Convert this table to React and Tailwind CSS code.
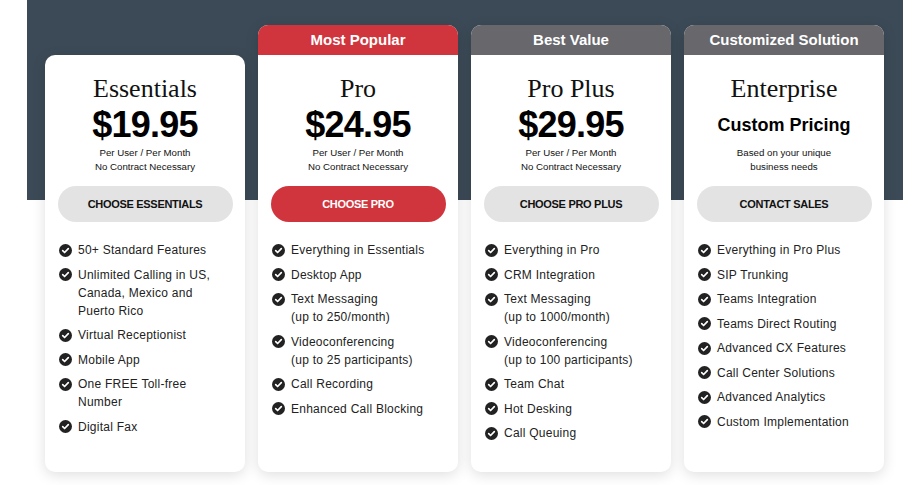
import React from "react";

const plans = [
  {
    header: null,
    title: "Essentials",
    price: "$19.95",
    sub: ["Per User / Per Month", "No Contract Necessary"],
    button: "CHOOSE ESSENTIALS",
    primary: false,
    features: [
      ["50+ Standard Features"],
      ["Unlimited Calling in US,", "Canada, Mexico and", "Puerto Rico"],
      ["Virtual Receptionist"],
      ["Mobile App"],
      ["One FREE Toll-free", "Number"],
      ["Digital Fax"],
    ],
  },
  {
    header: "Most Popular",
    headerRed: true,
    title: "Pro",
    price: "$24.95",
    sub: ["Per User / Per Month", "No Contract Necessary"],
    button: "CHOOSE PRO",
    primary: true,
    features: [
      ["Everything in Essentials"],
      ["Desktop App"],
      ["Text Messaging", "(up to 250/month)"],
      ["Videoconferencing", "(up to 25 participants)"],
      ["Call Recording"],
      ["Enhanced Call Blocking"],
    ],
  },
  {
    header: "Best Value",
    title: "Pro Plus",
    price: "$29.95",
    sub: ["Per User / Per Month", "No Contract Necessary"],
    button: "CHOOSE PRO PLUS",
    primary: false,
    features: [
      ["Everything in Pro"],
      ["CRM Integration"],
      ["Text Messaging", "(up to 1000/month)"],
      ["Videoconferencing", "(up to 100 participants)"],
      ["Team Chat"],
      ["Hot Desking"],
      ["Call Queuing"],
    ],
  },
  {
    header: "Customized Solution",
    title: "Enterprise",
    custom: "Custom Pricing",
    sub: ["Based on your unique", "business needs"],
    button: "CONTACT SALES",
    primary: false,
    features: [
      ["Everything in Pro Plus"],
      ["SIP Trunking"],
      ["Teams Integration"],
      ["Teams Direct Routing"],
      ["Advanced CX Features"],
      ["Call Center Solutions"],
      ["Advanced Analytics"],
      ["Custom Implementation"],
    ],
  },
];

function Check() {
  return (
    <svg width="13" height="13" viewBox="0 0 13 13" className="shrink-0 mt-[2.5px]">
      <circle cx="6.5" cy="6.5" r="6.5" fill="#222222" />
      <path d="M3.7 6.7 L5.6 8.5 L9.3 4.7" fill="none" stroke="#ffffff" strokeWidth="1.7" strokeLinecap="round" strokeLinejoin="round" />
    </svg>
  );
}

function Card({ plan }) {
  return (
    <div
      className={`w-[200px] flex flex-col bg-white rounded-[10px] overflow-hidden shadow-[0_3px_14px_rgba(0,0,0,0.13)] ${
        plan.header ? "" : "mt-[30px]"
      }`}
    >
      {plan.header && (
        <div
          className={`h-[30px] flex items-center justify-center text-white text-[15px] font-bold ${
            plan.headerRed ? "bg-[#d0343c]" : "bg-[#67676c]"
          }`}
        >
          {plan.header}
        </div>
      )}
      <div className="flex flex-col items-center pt-[18px]">
        <div className="font-['Liberation_Serif',serif] text-[26px] leading-[32px] text-[#111]">{plan.title}</div>
        {plan.price ? (
          <div className="text-[36px] leading-[40px] font-bold tracking-[-0.8px] text-black">{plan.price}</div>
        ) : (
          <div className="text-[18px] leading-[40px] font-bold text-black">{plan.custom}</div>
        )}
        <div className="pt-[1px] text-[9.7px] leading-[14px] text-[#111] text-center">
          {plan.sub[0]}
          <br />
          {plan.sub[1]}
        </div>
        <div
          className={`mt-[12px] w-[175px] h-[36px] rounded-full flex items-center justify-center text-[11px] font-bold tracking-[-0.3px] ${
            plan.primary ? "bg-[#d0343c] text-white" : "bg-[#e3e3e3] text-[#111]"
          }`}
        >
          {plan.button}
        </div>
      </div>
      <div className="mt-[19px] pl-[14px] flex flex-col gap-[6.5px]">
        {plan.features.map((f, i) => (
          <div key={i} className="flex items-start gap-[6px]">
            <Check />
            <div className="text-[12px] leading-[18px] tracking-[0.25px] text-[#222]">
              {f.map((line, j) => (
                <div key={j}>{line}</div>
              ))}
            </div>
          </div>
        ))}
      </div>
    </div>
  );
}

export default function App() {
  return (
    <div className="w-[913px] h-[485px] bg-white overflow-hidden font-['Liberation_Sans',Arial,sans-serif]">
      <div className="ml-[27px] w-[876px] h-[485px] pt-[25px] pl-[18px] bg-[linear-gradient(to_bottom,#3c4a57_200px,transparent_200px)]">
        <div className="flex gap-[13px] h-[447px]">
          {plans.map((p) => (
            <Card key={p.title} plan={p} />
          ))}
        </div>
      </div>
    </div>
  );
}
